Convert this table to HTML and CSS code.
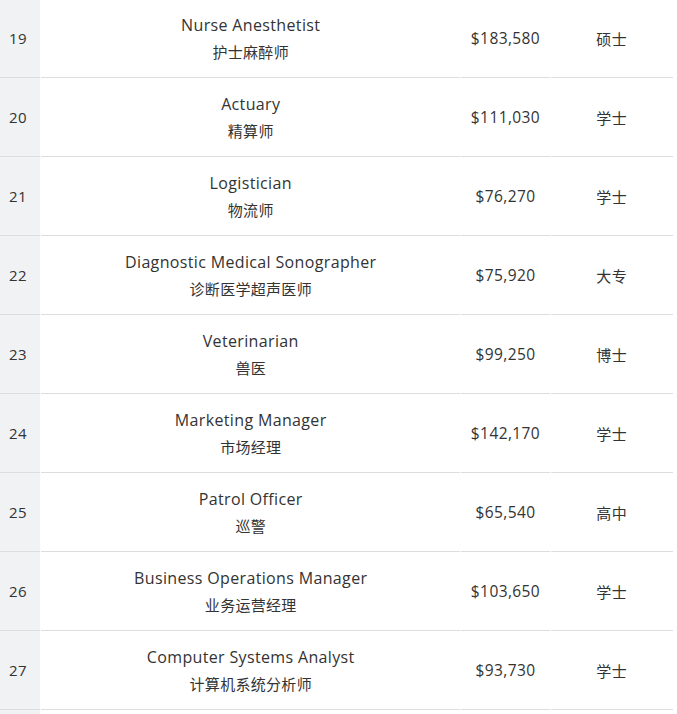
FILE: index.html
```html
<!DOCTYPE html>
<html lang="zh">
<head>
<meta charset="utf-8">
<title>职业薪资表</title>
<link rel="stylesheet" href="styles.css">
</head>
<body>
<table class="jobs">
<tbody>
<tr><td class="rank">19</td><td class="name"><div class="en">Nurse Anesthetist</div><div class="zh">护士麻醉师</div></td><td class="pay">$183,580</td><td class="edu">硕士</td></tr>
<tr><td class="rank">20</td><td class="name"><div class="en">Actuary</div><div class="zh">精算师</div></td><td class="pay">$111,030</td><td class="edu">学士</td></tr>
<tr><td class="rank">21</td><td class="name"><div class="en">Logistician</div><div class="zh">物流师</div></td><td class="pay">$76,270</td><td class="edu">学士</td></tr>
<tr><td class="rank">22</td><td class="name"><div class="en">Diagnostic Medical Sonographer</div><div class="zh">诊断医学超声医师</div></td><td class="pay">$75,920</td><td class="edu">大专</td></tr>
<tr><td class="rank">23</td><td class="name"><div class="en">Veterinarian</div><div class="zh">兽医</div></td><td class="pay">$99,250</td><td class="edu">博士</td></tr>
<tr><td class="rank">24</td><td class="name"><div class="en">Marketing Manager</div><div class="zh">市场经理</div></td><td class="pay">$142,170</td><td class="edu">学士</td></tr>
<tr><td class="rank">25</td><td class="name"><div class="en">Patrol Officer</div><div class="zh">巡警</div></td><td class="pay">$65,540</td><td class="edu">高中</td></tr>
<tr><td class="rank">26</td><td class="name"><div class="en">Business Operations Manager</div><div class="zh">业务运营经理</div></td><td class="pay">$103,650</td><td class="edu">学士</td></tr>
<tr><td class="rank">27</td><td class="name"><div class="en">Computer Systems Analyst</div><div class="zh">计算机系统分析师</div></td><td class="pay">$93,730</td><td class="edu">学士</td></tr>
<tr class="tail"><td class="rank"></td><td class="name"></td><td class="pay"></td><td class="edu"></td></tr>
</tbody>
</table>
</body>
</html>
```

FILE: styles.css
```css
html, body {
  margin: 0;
  padding: 0;
  background: #ffffff;
  overflow: hidden;
}
body {
  font-family: "Open Sans", "Noto Sans CJK SC", sans-serif;
  color: #333333;
  font-size: 16px;
  letter-spacing: 0.35px;
}
.jobs {
  border-collapse: separate;
  border-spacing: 1px 0;
  margin: -1px 0 0 -1px;
  width: 675px;
  table-layout: fixed;
}
.jobs td {
  border-bottom: 1px solid #dddddd;
  text-align: center;
  vertical-align: middle;
  padding: 0;
  height: 78px;
  box-sizing: content-box;
}
.jobs .rank {
  width: 40px;
  background: #f1f2f4;
  font-size: 15px;
  letter-spacing: 0.5px;
  text-indent: -4px;
}
.jobs .name {
  width: 418px;
}
.jobs .pay {
  width: 88px;
  font-size: 15.5px;
  letter-spacing: 0.4px;
}
.jobs .edu {
  width: 122px;
  font-family: "Noto Sans CJK SC", sans-serif;
  font-size: 15px;
  letter-spacing: 0.5px;
}
.en {
  line-height: 26px;
  padding-bottom: 1px;
}
.zh {
  line-height: 26px;
  font-family: "Noto Sans CJK SC", sans-serif;
  font-size: 15px;
  letter-spacing: 0.3px;
}
```
